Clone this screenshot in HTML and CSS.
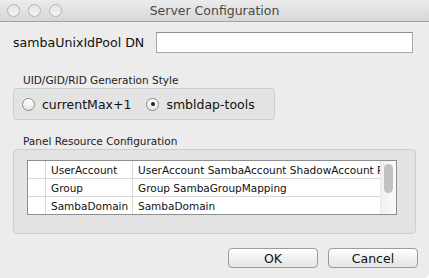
FILE: index.html
```html
<!DOCTYPE html>
<html lang="en">
<head>
  <meta charset="UTF-8" />
  <title>Server Configuration</title>
  <link rel="stylesheet" href="styles.css">
</head>
<body>
  <div class="window">
    <!-- Title bar -->
    <div class="titlebar">
      <div class="lights">
        <span class="light"></span>
        <span class="light"></span>
        <span class="light"></span>
      </div>
      <div class="title">Server Configuration</div>
      <div></div>
    </div>

    <div class="content">
      <div class="dn-row">
        <label for="dn">sambaUnixIdPool DN</label>
        <input type="text" id="dn" class="field">
      </div>

      <div class="group-title">UID/GID/RID Generation Style</div>
      <div class="box radio-box">
        <div class="radio"><span class="dot"></span>currentMax+1</div>
        <div class="radio"><span class="dot checked"></span>smbldap-tools</div>
      </div>

      <div class="group-title panel-title">Panel Resource Configuration</div>
      <div class="box panel-box">
        <div class="table-wrap">
          <table class="res-table">
            <tr><td class="c0"></td><td class="c1">UserAccount</td><td class="c2">UserAccount SambaAccount ShadowAccount PosixAccount</td></tr>
            <tr><td class="c0"></td><td class="c1">Group</td><td class="c2">Group SambaGroupMapping</td></tr>
            <tr><td class="c0"></td><td class="c1">SambaDomain</td><td class="c2">SambaDomain</td></tr>
          </table>
          <div class="scrollbar"><div class="thumb"></div></div>
        </div>
      </div>

      <div class="actions">
        <button class="btn">OK</button>
        <button class="btn">Cancel</button>
      </div>
    </div>
  </div>
</body>
</html>
```

FILE: styles.css
```css
body {
  margin: 0;
  font-family: 'DejaVu Sans', 'Liberation Sans', sans-serif;
  background-color: #ffffff;
}

.window {
  width: 429px;
  height: 278px;
  background-color: #ececec;
  border-bottom-right-radius: 5px;
  overflow: hidden;
}

.titlebar {
  height: 21px;
  display: grid;
  grid-template-columns: 1fr auto 1fr;
  align-items: center;
  background: linear-gradient(#ececec, #d6d6d6);
  border-bottom: 1px solid #a3a3a3;
}

.lights {
  display: flex;
  gap: 8px;
  padding-left: 7px;
}

.light {
  width: 11px;
  height: 11px;
  border-radius: 50%;
  border: 1px solid #b3b3b3;
  background: linear-gradient(#e4e4e4, #f4f4f4);
}

.title {
  font-size: 12.5px;
  color: #4a4a4a;
}

.content {
  padding: 10px 11px 0 13px;
}

.dn-row {
  display: flex;
  align-items: center;
  justify-content: space-between;
  padding-right: 5px;
}

.dn-row label {
  font-size: 12.6px;
  color: #111;
}

.field {
  width: 257px;
  height: 21px;
  box-sizing: border-box;
  border: 1px solid #a8a8a8;
  border-top-color: #8c8c8c;
  background: #fff;
  margin: 0;
}

.group-title {
  font-size: 10.5px;
  color: #222;
  margin: 21px 0 1px 10px;
  height: 13px;
  line-height: 13px;
}

.panel-title {
  margin-top: 15px;
}

.box {
  background-color: #e3e3e3;
  border: 1px solid #cdcdcd;
  border-radius: 4px;
  box-sizing: border-box;
}

.radio-box {
  width: 262px;
  height: 32px;
  display: flex;
  align-items: center;
  gap: 15px;
  padding-left: 8px;
}

.radio {
  display: flex;
  align-items: center;
  gap: 7px;
  font-size: 12.5px;
  color: #111;
}

.dot {
  width: 11px;
  height: 11px;
  border-radius: 50%;
  border: 1px solid #8a8a8a;
  background: linear-gradient(#ffffff, #e6e6e6);
  display: flex;
  align-items: center;
  justify-content: center;
}

.dot.checked::after {
  content: "";
  width: 4px;
  height: 4px;
  border-radius: 50%;
  background: #222;
}

.panel-box {
  width: 403px;
  height: 85px;
  padding: 10px 0 0 13px;
}

.table-wrap {
  width: 370px;
  height: 55px;
  box-sizing: border-box;
  border: 1px solid #8e8e8e;
  background: #fff;
  display: flex;
  overflow: hidden;
}

.res-table {
  border-collapse: collapse;
  table-layout: fixed;
  width: 352px;
  font-size: 10.5px;
  color: #111;
}

.res-table td {
  height: 17px;
  padding: 0 0 0 5px;
  border-right: 1px solid #d8d8d8;
  border-bottom: 1px solid #d8d8d8;
  white-space: nowrap;
  overflow: hidden;
}

.res-table tr:last-child td {
  border-bottom: none;
}

.res-table .c0 {
  width: 12px;
}

.res-table .c1 {
  width: 81px;
}

.res-table .c2 {
  border-right: none;
}

.scrollbar {
  width: 16px;
  flex-shrink: 0;
  background: linear-gradient(to right, #f0f0f0, #fafafa);
  border-left: 1px solid #e6e6e6;
  padding: 3px 0 0 3px;
  box-sizing: border-box;
}

.thumb {
  width: 9px;
  height: 29px;
  border-radius: 5px;
  background-color: #c2c2c2;
}

.actions {
  display: flex;
  justify-content: flex-end;
  gap: 10px;
  margin-top: 14px;
}

.btn {
  width: 90px;
  height: 20px;
  font-family: 'DejaVu Sans', 'Liberation Sans', sans-serif;
  font-size: 12.5px;
  color: #111;
  border: 1px solid #9a9a9a;
  border-radius: 4px;
  background: linear-gradient(#ffffff, #f0f0f0 50%, #e6e6e6);
  padding: 0;
}
```
